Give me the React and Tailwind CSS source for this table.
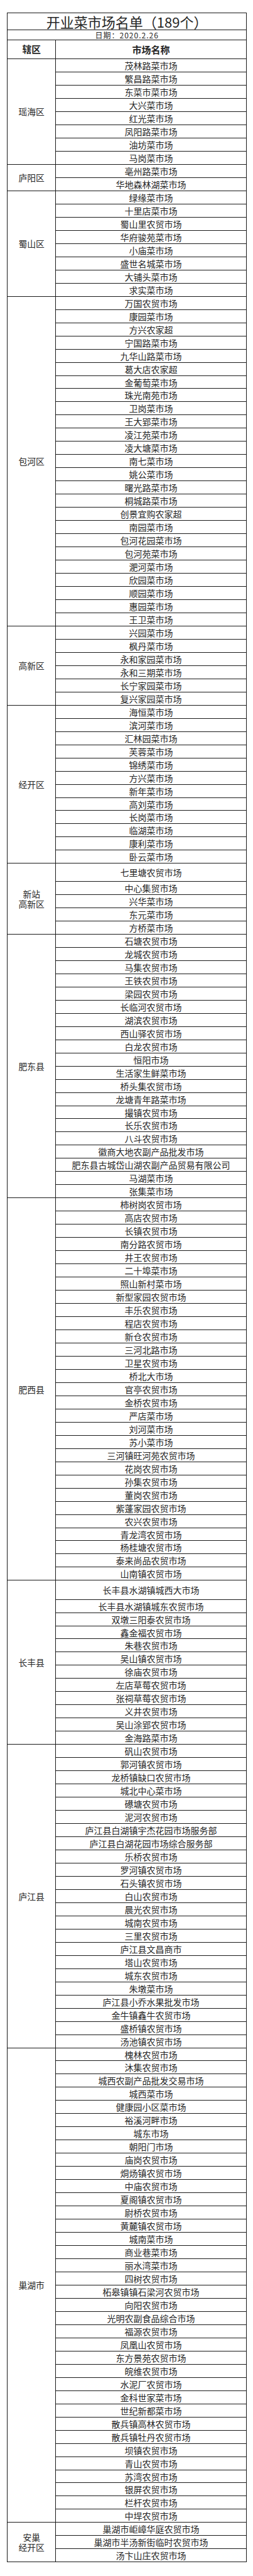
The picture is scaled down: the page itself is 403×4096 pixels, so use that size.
import React from "react";

const groups = [
  { name: ["瑶海区"], rows: ["茂林路菜市场", "繁昌路菜市场", "东菜市菜市场", "大兴菜市场", "红光菜市场", "凤阳路菜市场", "油坊菜市场", "马岗菜市场"] },
  { name: ["庐阳区"], rows: ["亳州路菜市场", "华地森林湖菜市场"] },
  { name: ["蜀山区"], rows: ["绿缘菜市场", "十里店菜市场", "蜀山里农贸市场", "华府骏苑菜市场", "小庙菜市场", "盛世名城菜市场", "大铺头菜市场", "求实菜市场"] },
  { name: ["包河区"], rows: ["万国农贸市场", "康园菜市场", "方兴农家超", "宁国路菜市场", "九华山路菜市场", "葛大店农家超", "金葡萄菜市场", "珠光南苑市场", "卫岗菜市场", "王大郢菜市场", "凌江苑菜市场", "凌大塘菜市场", "南七菜市场", "姚公菜市场", "曙光路菜市场", "桐城路菜市场", "创景宜购农家超", "南园菜市场", "包河花园菜市场", "包河苑菜市场", "淝河菜市场", "欣园菜市场", "顺园菜市场", "惠园菜市场", "王卫菜市场"] },
  { name: ["高新区"], rows: ["兴园菜市场", "枫丹菜市场", "永和家园菜市场", "永和三期菜市场", "长宁家园菜市场", "复兴家园菜市场"] },
  { name: ["经开区"], rows: ["海恒菜市场", "滨河菜市场", "汇林园菜市场", "芙蓉菜市场", "锦绣菜市场", "方兴菜市场", "新年菜市场", "高刘菜市场", "长岗菜市场", "临湖菜市场", "康利菜市场", "卧云菜市场"] },
  { name: ["新站", "高新区"], rows: ["七里塘农贸市场", "中心集贸市场", "兴华菜市场", "东元菜市场", "方桥菜市场"] },
  { name: ["肥东县"], rows: ["石塘农贸市场", "龙城农贸市场", "马集农贸市场", "王铁农贸市场", "梁园农贸市场", "长临河农贸市场", "湖滨农贸市场", "西山驿农贸市场", "白龙农贸市场", "恒阳市场", "生活家生鲜菜市场", "桥头集农贸市场", "龙塘青年路菜市场", "撮镇农贸市场", "长乐农贸市场", "八斗农贸市场", "徽商大地农副产品批发市场", "肥东县古城岱山湖农副产品贸易有限公司", "马湖菜市场", "张集菜市场"] },
  { name: ["肥西县"], rows: ["柿树岗农贸市场", "高店农贸市场", "长镇农贸市场", "南分路农贸市场", "井王农贸市场", "二十埠菜市场", "照山新村菜市场", "新型家园农贸市场", "丰乐农贸市场", "程店农贸市场", "新仓农贸市场", "三河北路市场", "卫星农贸市场", "桥北大市场", "官亭农贸市场", "金桥农贸市场", "严店菜市场", "刘河菜市场", "苏小菜市场", "三河镇旺河苑农贸市场", "花岗农贸市场", "孙集农贸市场", "董岗农贸市场", "紫蓬家园农贸市场", "农兴农贸市场", "青龙湾农贸市场", "杨桂塘农贸市场", "泰来尚品农贸市场", "山南镇农贸市场"] },
  { name: ["长丰县"], rows: ["长丰县水湖镇城西大市场", "长丰县水湖镇城东农贸市场", "双墩三阳泰农贸市场", "鑫金福农贸市场", "朱巷农贸市场", "吴山镇农贸市场", "徐庙农贸市场", "左店草莓农贸市场", "张祠草莓农贸市场", "义井农贸市场", "吴山涂郢农贸市场", "金海路菜市场"] },
  { name: ["庐江县"], rows: ["矾山农贸市场", "郭河镇农贸市场", "龙桥镇缺口农贸市场", "城北中心菜市场", "礤塘农贸市场", "泥河农贸市场", "庐江县白湖镇宇杰花园市场服务部", "庐江县白湖花园市场综合服务部", "乐桥农贸市场", "罗河镇农贸市场", "石头镇农贸市场", "白山农贸市场", "晨光农贸市场", "城南农贸市场", "三里农贸市场", "庐江县文昌商市", "塔山农贸市场", "城东农贸市场", "朱墩菜市场", "庐江县小乔水果批发市场", "金牛镇鑫牛农贸市场", "盛桥镇农贸市场", "汤池镇农贸市场"] },
  { name: ["巢湖市"], rows: ["槐林农贸市场", "沐集农贸市场", "城西农副产品批发交易市场", "城西菜市场", "健康园小区菜市场", "裕溪河畔市场", "城东市场", "朝阳门市场", "庙岗农贸市场", "烔炀镇农贸市场", "中庙农贸市场", "夏阁镇农贸市场", "尉桥农贸市场", "黄麓镇农贸市场", "城南菜市场", "商业巷菜市场", "丽水湾菜市场", "四树农贸市场", "柘皋镇镇石梁河农贸市场", "向阳农贸市场", "光明农副食品综合市场", "福源农贸市场", "凤凰山农贸市场", "东方景苑农贸市场", "皖维农贸市场", "水泥厂农贸市场", "金科世家菜市场", "世纪新都菜市场", "散兵镇高林农贸市场", "散兵镇牡丹农贸市场", "坝镇农贸市场", "青山农贸市场", "苏湾农贸市场", "银屏农贸市场", "栏杆农贸市场", "中垾农贸市场"] },
  { name: ["安巢", "经开区"], rows: ["巢湖市岠嶂华庭农贸市场", "巢湖市半汤新街临时农贸市场", "汤卞山庄农贸市场"] },
];

function Row({ text }) {
  const cls =
    text === "七里塘农贸市场"
      ? "h-[28.7px] border-b border-[#1a1a1a] flex items-center justify-center"
      : text === "长丰县水湖镇城西大市场"
      ? "h-[30.2px] border-b border-[#1a1a1a] flex items-center justify-center"
      : "h-[20.97px] border-b border-[#1a1a1a] flex items-center justify-center";
  return (
    <div className={cls}>
      <span className="text-[14px] leading-none whitespace-nowrap">{text}</span>
    </div>
  );
}

function Group({ g }) {
  return (
    <div className="flex">
      <div className="w-[76.7px] shrink-0 border-r border-b border-[#1a1a1a] flex flex-col items-center justify-center text-[13.8px] leading-[16.3px] text-center">
        {g.name.map((n) => (
          <span key={n}>{n}</span>
        ))}
      </div>
      <div className="flex-1 flex flex-col">
        {g.rows.map((r) => (
          <Row key={r} text={r} />
        ))}
      </div>
    </div>
  );
}

export default function App() {
  return (
    <div className="bg-white w-[403px] pt-[20.2px] pb-[19px] font-['Noto_Sans_CJK_SC','Noto_Sans',sans-serif] text-[#262626]">
      <div className="ml-[11.4px] w-[381.6px] border-l border-t border-r border-[#1a1a1a]">
        <div className="h-[26.9px] border-b border-[#1a1a1a] flex items-center justify-center">
          <span className="text-[22px] leading-none whitespace-nowrap">开业菜市场名单（189个）</span>
        </div>
        <div className="h-[16px] border-b border-[#1a1a1a] flex items-center justify-center">
          <span className="text-[12px] leading-none tracking-[1px] whitespace-nowrap">日期：2020.2.26</span>
        </div>
        <div className="h-[30.2px] border-b border-[#1a1a1a] flex">
          <div className="w-[76.7px] shrink-0 border-r border-[#1a1a1a] flex items-center justify-center">
            <span className="text-[14.7px] font-bold leading-none">辖区</span>
          </div>
          <div className="flex-1 flex items-center justify-center">
            <span className="text-[15px] font-bold leading-none">市场名称</span>
          </div>
        </div>
        {groups.map((g) => (
          <Group key={g.name.join("")} g={g} />
        ))}
      </div>
    </div>
  );
}
